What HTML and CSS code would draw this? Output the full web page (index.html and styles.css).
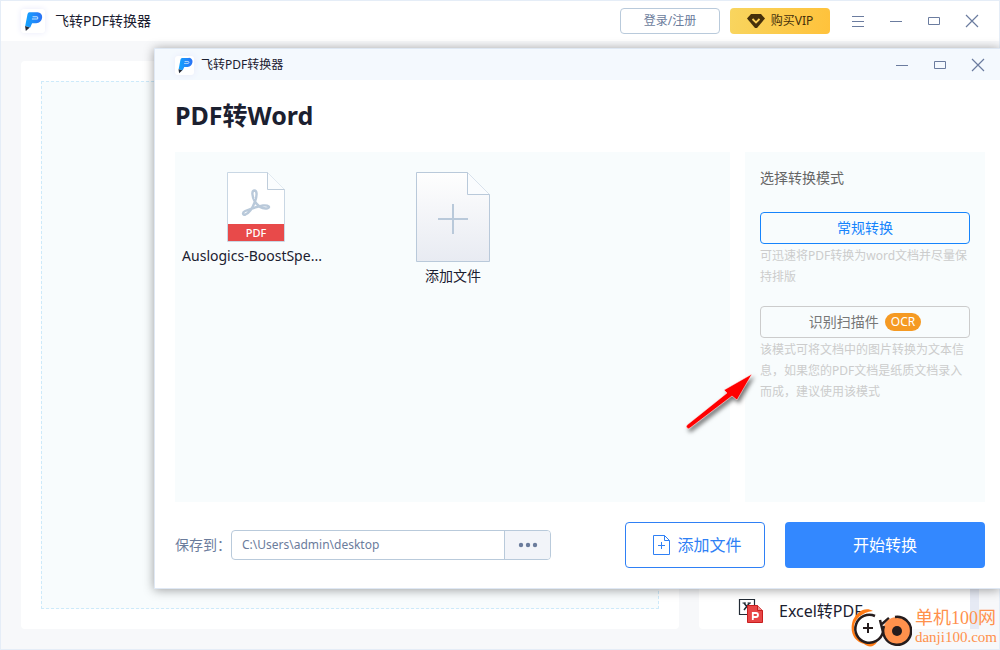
FILE: index.html
```html
<!DOCTYPE html>
<html lang="zh-CN">
<head>
<meta charset="utf-8">
<title>飞转PDF转换器</title>
<link rel="stylesheet" href="styles.css">
</head>
<body>
<svg class="defs" aria-hidden="true">
  <defs>
    <linearGradient id="brand" x1="0" y1="0" x2="1" y2="0"><stop offset="0" stop-color="#12a5ff"/><stop offset="1" stop-color="#2b72f5"/></linearGradient>
    <linearGradient id="paper" x1="0" y1="0" x2="0" y2="1"><stop offset="0" stop-color="#fefefe"/><stop offset="1" stop-color="#e8ebf2"/></linearGradient>
    <symbol id="logo" viewBox="0 0 24 24">
      <path d="M8 2.500H17a5 5 0 0 1 5 5.500c-.4 4-3 6.500-6.500 6.500H11L9 19 3.500 17.500 6 4.500Q6.500 2.500 8 2.500Z" fill="url(#brand)"/>
      <path d="M11.500 7.300H16a1.200 1.200 0 0 1 0 2.600H10.800" fill="none" stroke="#c3e6ff" stroke-width="1.100"/>
      <path d="M3.300 17.500l5.200 1.500-4.300 4Z" fill="#252b38"/>
    </symbol>
    <symbol id="min" viewBox="0 0 14 14"><path d="M1 7.500h12" fill="none" stroke="currentColor"/></symbol>
    <symbol id="max" viewBox="0 0 14 14"><path d="M1.500 3.500h11v7h-11z" fill="none" stroke="currentColor"/></symbol>
    <symbol id="close" viewBox="0 0 14 14"><path d="M1 1l12 12M13 1L1 13" fill="none" stroke="currentColor" stroke-width="1.200"/></symbol>
  </defs>
</svg>
<div class="app">
  <header class="topbar">
    <span class="logo"><svg><use href="#logo"/></svg></span>
    <span class="app-name">飞转PDF转换器</span>
    <button class="login">登录/注册</button>
    <button class="vip">
      <svg width="18" height="14" viewBox="0 0 18 14"><path d="M4 0h10l4 4.500L10 14H8L0 4.500Z" fill="#45300b"/><path d="M5.500 5L9 8.500 12.500 5" fill="none" stroke="#fbcf55" stroke-width="1.800"/></svg>
      购买VIP
    </button>
    <div class="controls main-controls">
      <button aria-label="菜单"><svg viewBox="0 0 14 14"><path d="M1 2.500h12M1 7.500h12M1 12.500h12" fill="none" stroke="currentColor"/></svg></button>
      <button aria-label="最小化"><svg><use href="#min"/></svg></button>
      <button aria-label="最大化"><svg><use href="#max"/></svg></button>
      <button aria-label="关闭"><svg><use href="#close"/></svg></button>
    </div>
  </header>
  <main class="workspace">
    <section class="card"><div class="dropzone"></div></section>
    <section class="tools">
      <a class="tool" href="#">
        <svg width="26" height="26" viewBox="0 0 26 26"><path d="M1.500 1.500h15v15h-15z" fill="#fff" stroke="#222b35" stroke-width="1.200"/><path d="M6 5l5.500 7M11.500 5L6 12" fill="none" stroke="#222b35" stroke-width="1.500"/><path d="M4.500 5H8M9.500 5H13" fill="none" stroke="#222b35"/><path d="M9.500 7.500h10l5 5v12h-15Z" fill="#e84646" stroke="#c81e1e"/><path d="M19.500 7.500v5h5" fill="#f08b8b" stroke="#c81e1e"/><path d="M14.800 22v-7H18a2 2 0 0 1 0 4h-3" fill="none" stroke="#fff" stroke-width="1.800"/></svg>
        Excel转PDF
      </a>
      <div class="scrollbar"></div>
    </section>
  </main>
</div>

<section class="dialog" role="dialog" aria-labelledby="dialog-title">
  <header class="dialog-bar">
    <span class="logo small"><svg><use href="#logo"/></svg></span>
    <span>飞转PDF转换器</span>
    <div class="controls">
      <button aria-label="最小化"><svg><use href="#min"/></svg></button>
      <button aria-label="最大化"><svg><use href="#max"/></svg></button>
      <button aria-label="关闭"><svg><use href="#close"/></svg></button>
    </div>
  </header>
  <div class="dialog-body">
    <h1 id="dialog-title">PDF转Word</h1>
    <div class="panels">
      <div class="files">
        <figure class="file">
          <svg width="58" height="70" viewBox="0 0 58 70"><path d="M.5.500h40l17 17v52H.5Z" fill="#fff" stroke="#c9d7e4"/><path d="M40.500.500v17h17" fill="#fbfdfe" stroke="#bfcddb"/><path d="M1 52h56v17H1z" fill="#e84a4a"/>
            <g fill="none" stroke="#b9c9da" stroke-width="2.400" stroke-linejoin="round"><path d="M27.500 29c-2.500-5-3-10-.3-10.500 3-.3 3 5 .8 11C26 35 22 41 18.500 42.500c-3 1-3.500-2-.3-3.500C23 37 30 34.500 36 33.500c6-.6 7.500 2 4.500 2.800-4.500.8-9.500-1.800-13-7.300"/></g>
            <text x="29" y="65" class="pdf-label">PDF</text></svg>
          <figcaption>Auslogics-BoostSpe...</figcaption>
        </figure>
        <button class="file add-tile">
          <svg width="74" height="90" viewBox="0 0 74 90"><path d="M.5.500h51l22 22v67H.5Z" fill="url(#paper)" stroke="#b9c9da"/><path d="M51.500.500v22h22" fill="#fafcfe" stroke="#b9c9da"/><path d="M22 47h30M37 32v30" stroke="#b9c9da" stroke-width="2"/></svg>
          <span>添加文件</span>
        </button>
      </div>
      <aside class="modes">
        <h2>选择转换模式</h2>
        <button class="mode selected">常规转换</button>
        <p>可迅速将PDF转换为word文档并尽量保持排版</p>
        <button class="mode">识别扫描件<span class="ocr">OCR</span></button>
        <p>该模式可将文档中的图片转换为文本信息，如果您的PDF文档是纸质文档录入而成，建议使用该模式</p>
      </aside>
    </div>
    <footer class="actions">
      <label for="path">保存到：</label>
      <div class="path">
        <input id="path" type="text" value="C:\Users\admin\desktop">
        <button aria-label="浏览"><svg width="20" height="6" viewBox="0 0 20 6" fill="currentColor"><circle cx="3" cy="3" r="2.200"/><circle cx="10" cy="3" r="2.200"/><circle cx="17" cy="3" r="2.200"/></svg></button>
      </div>
      <button class="add-file"><svg width="18" height="20" viewBox="0 0 18 20" fill="none" stroke="currentColor"><path d="M.5.500h11l5 5v14H.5ZM11.500.500v5h5M5 10.500h7M8.500 7v7"/></svg>添加文件</button>
      <button class="start">开始转换</button>
    </footer>
  </div>
</section>

<svg class="arrow" width="74" height="66" viewBox="0 0 74 66" aria-hidden="true">
  <path d="M3 54L43 22 40 19 68 3 53 29 48 25 6 57a2 2 0 0 1-3-3Z" fill="#f00" stroke="#fff" stroke-width=".5"/>
</svg>
<div class="watermark">
  <svg width="62" height="42" viewBox="0 0 62 42" fill="none" aria-hidden="true">
    <path d="M23 4C15-1 7 5 3 13-1 25 4 34 14 37c5 4 10 3 13-2-10 2-18-3-21-11C4 14 9 6 23 4Z" fill="#ff7b16"/>
    <circle cx="18" cy="21" r="14" fill="#fff"/>
    <path d="M25 9A14 14 0 1 0 33 25L30 13M32 17L39 11" stroke="#251c1d" stroke-width="2.500"/>
    <path d="M18 16v10M13 21h10" stroke="#251c1d" stroke-width="2"/>
    <circle cx="47" cy="24" r="14" fill="#ff914c"/><path d="M45 10A14 14 0 1 1 34 19" stroke="#251c1d" stroke-width="2.500"/><circle cx="47" cy="24" r="5" fill="#251c1d"/>
  </svg>
  <div><strong>单机100网</strong><span>danji100.com</span></div>
</div>
</body>
</html>
```
FILE: styles.css
```css
* { box-sizing: border-box; }
body {
  margin: 0;
  font: 14px/20px "Noto Sans", "Noto Sans CJK SC", sans-serif;
  color: #1b2030;
  overflow: hidden;
}
button, input { font: inherit; color: inherit; margin: 0; padding: 0; border: 0; background: none; }
button { cursor: pointer; }
svg { display: block; flex: none; }
.defs { position: absolute; width: 0; height: 0; }

.app {
  display: flex;
  flex-direction: column;
  height: 100vh;
  border: 1px solid #e5edf7;
  background: #f7f8fa;
}
.topbar {
  display: flex;
  align-items: center;
  height: 40px;
  padding: 0 20px;
  background: #fff;
}
.logo {
  display: grid;
  place-items: center;
  width: 24px;
  height: 24px;
  margin-right: 10px;
  border-radius: 3px;
  background: #fff;
  box-shadow: 0 0 6px #e8eafa;
}
.logo svg { width: 22px; height: 22px; }
.logo.small { width: 19px; height: 19px; margin-right: 7px; }
.logo.small svg { width: 18px; height: 18px; }
.app-name { margin-right: auto; }
.login, .vip {
  display: flex;
  align-items: center;
  justify-content: center;
  gap: 6px;
  width: 100px;
  height: 26px;
  margin-right: 10px;
  border-radius: 4px;
  font-size: 12px;
}
.login { border: 1px solid #b9cadb; color: #6b7c9c; }
.vip { background: linear-gradient(100deg, #f8d55f, #ffc23b); color: #45300b; }
.controls { display: flex; gap: 24px; color: #6b7c9f; }
.controls button, .controls svg { width: 14px; height: 14px; }
.main-controls { margin-left: 11px; }

.workspace {
  flex: 1;
  display: flex;
  gap: 20px;
  padding: 20px;
}
.card { flex: 1; padding: 20px; border-radius: 4px; background: #fff; }
.dropzone { height: 100%; border: 1px dashed #cdeafa; background: #f8fcfd; }
.tools {
  display: flex;
  align-items: flex-end;
  width: 280px;
  border-radius: 4px;
  background: #fff;
}
.tool {
  flex: 1;
  display: flex;
  align-items: center;
  gap: 15px;
  padding: 0 0 5px 39px;
  font-size: 16px;
  color: inherit;
  text-decoration: none;
}
.scrollbar { width: 9px; height: 100%; background: #e6eaf4; }

.dialog {
  position: absolute;
  top: 48px;
  left: 154px;
  right: 0;
  border: 1px solid #dfe8f4;
  border-right: 0;
  background: #fff;
  box-shadow: 0 1px 10px rgba(0, 0, 0, .38);
}
.dialog-bar {
  display: flex;
  align-items: center;
  height: 31px;
  padding: 1px 15px 0 20px;
  background: #f4f9fe;
  font-size: 12px;
}
.dialog-bar .controls { margin-left: auto; }
.dialog-body { padding: 19px 15px 20px 20px; }
h1 { margin: 0 0 21px; font-size: 25px; line-height: 32px; font-weight: 700; }
.panels { display: flex; gap: 15px; min-height: 350px; }
.files { flex: 1; display: flex; padding: 20px 5px; background: #f8fcfd; }
.file {
  display: flex;
  flex-direction: column;
  align-items: center;
  align-self: flex-start;
  gap: 4px;
  margin: 0;
  width: 152px;
}
.file figcaption { padding-right: 8px; }
.files .add-tile { margin-left: 45px; }
.pdf-label { font-size: 11px; font-weight: 500; text-anchor: middle; fill: #fff; }
.modes { width: 240px; padding: 16px 15px 15px; background: #f8fcfd; }
h2 { margin: 0 0 24px; font-size: 14px; line-height: 20px; font-weight: 400; color: #666; }
.mode {
  display: flex;
  align-items: center;
  justify-content: center;
  gap: 6px;
  width: 100%;
  height: 32px;
  border: 1px solid #ccc;
  border-radius: 4px;
  color: #777;
}
.mode.selected { border-color: #1684fc; color: #1684fc; }
.ocr {
  padding: 0 6px;
  border-radius: 9px;
  background: #f59a23;
  color: #fff;
  font-size: 12px;
  line-height: 18px;
}
.modes p { margin: 1px 0 19px; font-size: 12px; line-height: 21px; color: #ccc; }
.actions { display: flex; align-items: center; margin-top: 20px; color: #6b7c9c; }
.actions label { width: 56px; white-space: nowrap; }
.path {
  display: flex;
  width: 320px;
  height: 30px;
  border: 1px solid #b9cadb;
  border-radius: 4px;
  overflow: hidden;
}
.path input { flex: 1; min-width: 0; padding: 0 10px; font-size: 12px; }
.path button {
  display: grid;
  place-items: center;
  width: 46px;
  border-left: 1px solid #b9cadb;
  background: #f2f4f9;
}
.add-file, .start {
  display: flex;
  align-items: center;
  justify-content: center;
  gap: 6px;
  height: 46px;
  border-radius: 4px;
  font-size: 16px;
}
.add-file { width: 140px; margin-left: auto; padding-left: 5px; border: 1px solid #2f80f5; color: #2f80f5; }
.start { width: 200px; margin-left: 20px; background: #3388ff; color: #fff; }

.arrow {
  position: absolute;
  left: 684px;
  top: 371px;
  filter: drop-shadow(2px 3px 2px rgba(0, 0, 0, .55));
}
.watermark {
  position: absolute;
  right: 3px;
  bottom: 1px;
  display: flex;
  gap: 3px;
  color: #ff914c;
  font-family: "Liberation Serif", "Noto Sans CJK SC", serif;
}
.watermark strong, .watermark span { display: block; font-weight: 400; white-space: nowrap; }
.watermark strong { font-size: 18px; line-height: 22px; }
.watermark span { font-size: 15px; line-height: 16px; }
```
